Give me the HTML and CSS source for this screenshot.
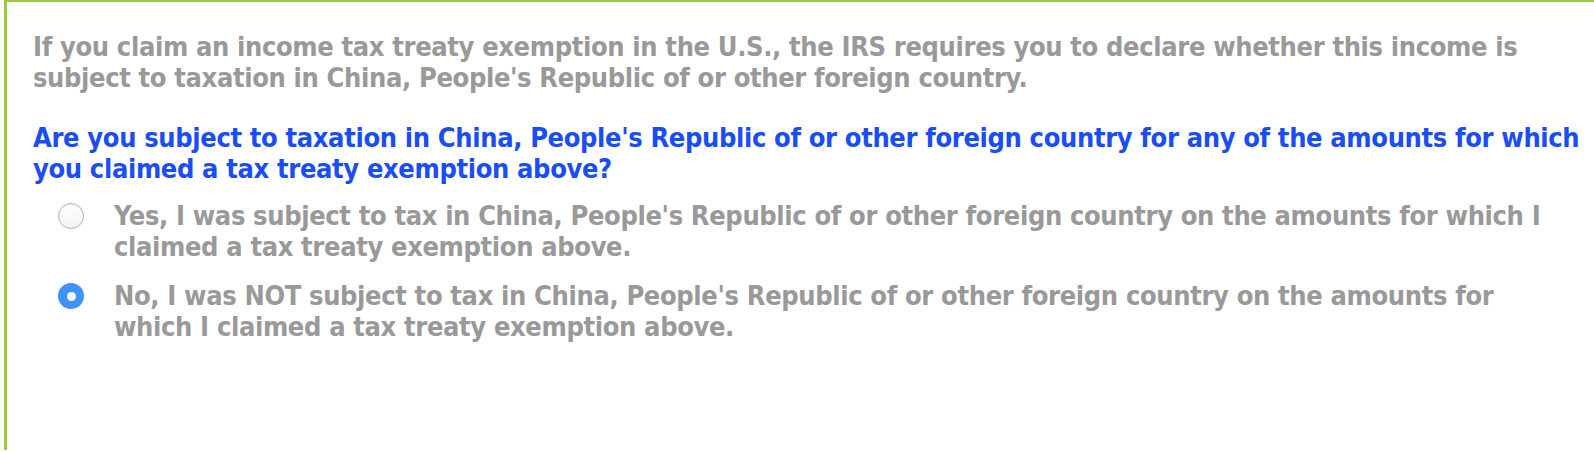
FILE: index.html
```html
<!DOCTYPE html>
<html lang="en">
<head>
<meta charset="utf-8">
<title>Tax treaty question</title>
<link rel="stylesheet" href="styles.css">
</head>
<body>
<div class="panel">
  <p class="intro">If you claim an income tax treaty exemption in the U.S., the IRS requires you to declare whether this income is subject to taxation in China, People's Republic of or other foreign country.</p>
  <p class="question">Are you subject to taxation in China, People's Republic of or other foreign country for any of the amounts for which you claimed a tax treaty exemption above?</p>
  <div class="options">
    <label class="option">
      <span class="radio"></span>
      <span class="option-text">Yes, I was subject to tax in China, People's Republic of or other foreign country on the amounts for which I claimed a tax treaty exemption above.</span>
    </label>
    <label class="option">
      <span class="radio checked"></span>
      <span class="option-text">No, I was NOT subject to tax in China, People's Republic of or other foreign country on the amounts for which I claimed a tax treaty exemption above.</span>
    </label>
  </div>
</div>
</body>
</html>
```
FILE: styles.css
```css
html, body {
  margin: 0;
  padding: 0;
  background: #ffffff;
}

body {
  width: 1594px;
  height: 452px;
  overflow: hidden;
}

.panel {
  margin-left: 4px;
  border-top: 2px solid #9acb3c;
  border-left: 3px solid #9acb3c;
  height: 450px;
  padding: 29px 0 0 26px;
  box-sizing: border-box;
  font-family: "DejaVu Sans Condensed", "DejaVu Sans", sans-serif;
  font-stretch: condensed;
  font-weight: bold;
  font-size: 27px;
  line-height: 31px;
  letter-spacing: -0.35px;
}

.intro {
  margin: 0;
  color: #999999;
  width: 1500px;
}

.question {
  margin: 29px 0 0 0;
  color: #1a4df3;
  width: 1556px;
}

.options {
  display: flex;
  flex-direction: column;
  gap: 18px;
  margin-top: 16px;
}

.option {
  display: flex;
  align-items: flex-start;
  gap: 30px;
  padding-left: 25px;
  color: #999999;
}

.radio {
  flex: 0 0 auto;
  width: 26px;
  height: 26px;
  margin-top: 3px;
  box-sizing: border-box;
  border-radius: 50%;
  border: 1px solid #b4b4b4;
  background: linear-gradient(#ffffff, #f3f3f3);
  box-shadow: inset 0 1px 1px rgba(0,0,0,0.08);
  position: relative;
}

.radio.checked {
  border: none;
  background: #3d94f6;
  box-shadow: none;
}

.radio.checked::after {
  content: "";
  position: absolute;
  left: 50%;
  top: 50%;
  width: 9px;
  height: 9px;
  margin: -4.5px 0 0 -4.5px;
  border-radius: 50%;
  background: #ffffff;
}

.option-text {
  width: 1442px;
}
```
